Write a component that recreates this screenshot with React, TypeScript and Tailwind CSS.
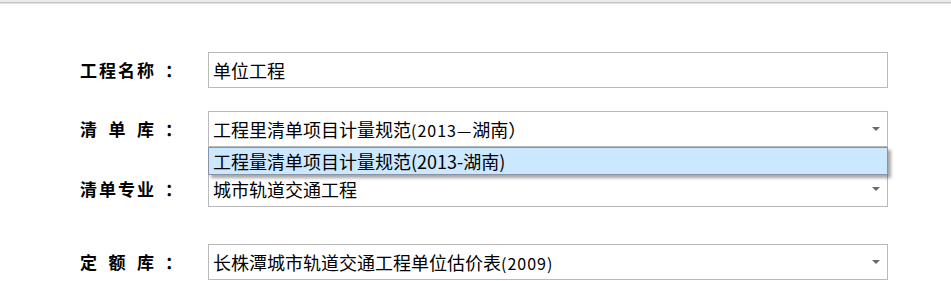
import React from "react";

function Label({ chars }: { chars: string[] }) {
  return (
    <div className="flex items-center w-[128px] shrink-0 text-[17px] font-bold text-black">
      <div className="flex justify-between w-[74px]">
        {chars.map((c) => (
          <span key={c}>{c}</span>
        ))}
      </div>
      <span className="ml-[11px]">：</span>
    </div>
  );
}

function Arrow() {
  return (
    <span className="w-0 h-0 border-l-[4px] border-r-[4px] border-t-[4px] border-l-transparent border-r-transparent border-t-[#6a6a6a]" />
  );
}

function Select({ text, tail, rest }: { text: string; tail?: string; rest?: string }) {
  return (
    <div className="flex items-center justify-between w-[680px] h-[36px] border border-[#b9b9b9] bg-white pl-[4px] pr-[7px]">
      <span className="text-[18px] text-black leading-none">
        {text}
        {tail && <span className="text-[16px] tracking-[1px]">{tail}</span>}
        {rest}
      </span>
      <Arrow />
    </div>
  );
}

export default function App() {
  return (
    <div className="relative w-[951px] h-[281px] overflow-hidden bg-white font-['Noto_Sans_CJK_SC','Noto_Sans',sans-serif]">
      <div className="h-[2px] bg-[#ebebeb]" />
      <div className="h-[1px] bg-[#c6c6c6]" />
      <div className="h-[1px] bg-[#e2e2e2]" />

      <div className="flex flex-col pl-[80px] pt-[48px]">
        <div className="flex items-center h-[36px]">
          <Label chars={["工", "程", "名", "称"]} />
          <div className="flex items-center w-[680px] h-[36px] border border-[#b9b9b9] pl-[4px]">
            <span className="text-[18px] text-black leading-none">单位工程</span>
          </div>
        </div>

        <div className="relative flex items-center h-[36px] mt-[23px]">
          <Label chars={["清", "单", "库"]} />
          <Select text="工程里清单项目计量规范" tail="(2013—" rest="湖南）" />
          <div className="absolute left-[128px] top-[36px] z-10 w-[680px] h-[28px] flex items-center border border-[#8a93a3] bg-[#cce8ff] pl-[4px] shadow-[3px_3px_3px_rgba(0,0,0,0.35)]">
            <span className="text-[18px] text-black leading-none">工程量清单项目计量规范(2013-湖南)</span>
          </div>
        </div>

        <div className="flex items-center h-[36px] mt-[24px]">
          <Label chars={["清", "单", "专", "业"]} />
          <Select text="城市轨道交通工程" />
        </div>

        <div className="flex items-center h-[36px] mt-[37px]">
          <Label chars={["定", "额", "库"]} />
          <Select text="长株潭城市轨道交通工程单位估价表" tail="(2009)" />
        </div>
      </div>
    </div>
  );
}
